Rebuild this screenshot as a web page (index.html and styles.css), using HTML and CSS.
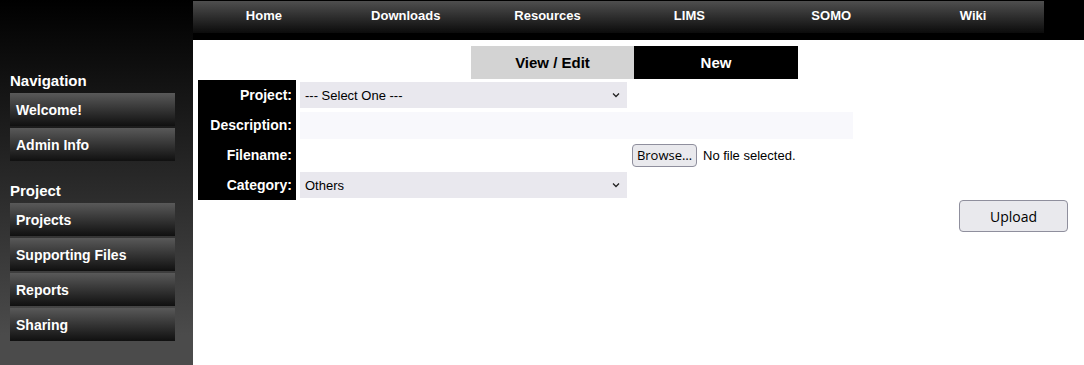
FILE: index.html
```html
<!DOCTYPE html>
<html lang="en">
<head>
  <meta charset="UTF-8" />
  <title>Supporting Files - New</title>
  <link rel="stylesheet" href="styles.css">
</head>
<body>
  <div class="page">
    <aside class="sidebar">
      <h3>Navigation</h3>
      <a class="side-btn" href="#">Welcome!</a>
      <a class="side-btn" href="#">Admin Info</a>
      <h3>Project</h3>
      <a class="side-btn" href="#">Projects</a>
      <a class="side-btn" href="#">Supporting Files</a>
      <a class="side-btn" href="#">Reports</a>
      <a class="side-btn" href="#">Sharing</a>
      <h3>Analysis</h3>
    </aside>
    <div class="main">
      <div class="topbar">
        <nav class="topnav">
          <a href="#">Home</a>
          <a href="#">Downloads</a>
          <a href="#">Resources</a>
          <a href="#">LIMS</a>
          <a href="#">SOMO</a>
          <a href="#">Wiki</a>
        </nav>
      </div>
      <div class="content">
        <div class="tabs">
          <a class="tab" href="#">View / Edit</a>
          <a class="tab active" href="#">New</a>
        </div>
        <form class="upload-form">
          <div class="label">Project:</div>
          <div class="field">
            <span class="select-wrap">
              <select><option>--- Select One ---</option></select>
              <svg class="chev" width="8" height="6" viewBox="0 0 8 6"><path d="M1 1.5 L4 4.5 L7 1.5" fill="none" stroke="#222" stroke-width="1.3"/></svg>
            </span>
          </div>
          <div class="label">Description:</div>
          <div class="field"><input class="desc" type="text"></div>
          <div class="label">Filename:</div>
          <div class="field file-field">
            <button type="button" class="browse">Browse…</button>
            <span class="nofile">No file selected.</span>
          </div>
          <div class="label">Category:</div>
          <div class="field">
            <span class="select-wrap">
              <select><option>Others</option></select>
              <svg class="chev" width="8" height="6" viewBox="0 0 8 6"><path d="M1 1.5 L4 4.5 L7 1.5" fill="none" stroke="#222" stroke-width="1.3"/></svg>
            </span>
          </div>
        </form>
        <div class="actions">
          <button type="button" class="upload">Upload</button>
        </div>
      </div>
    </div>
  </div>
</body>
</html>
```

FILE: styles.css
```css
body {
  margin: 0;
  background: #000;
  font-family: "Liberation Sans", Arial, sans-serif;
  color: #fff;
}
.page {
  display: grid;
  grid-template-columns: 193px 1fr;
  min-height: 365px;
}
.sidebar {
  background: linear-gradient(#000 0, #4b4b4b 335px);
  padding: 0 18px 0 10px;
  height: 365px;
  overflow: hidden;
}
.sidebar h3 {
  margin: 21px 0 3px;
  font-size: 15px;
  line-height: 18px;
}
.sidebar h3:first-child { margin-top: 72px; }
.side-btn {
  display: block;
  height: 33px;
  line-height: 34px;
  margin-bottom: 2px;
  padding-left: 6px;
  background: linear-gradient(#595959, #101010);
  color: #fff;
  text-decoration: none;
  font-weight: bold;
  font-size: 14px;
}
.main { background: #fff; }
.topbar {
  background: #000;
  height: 40px;
  padding-top: 1px;
  box-sizing: border-box;
}
.topnav {
  width: 851px;
  height: 32px;
  display: flex;
  background: linear-gradient(#4f4f4f, #0b0b0b);
}
.topnav a {
  flex: 1;
  text-align: center;
  line-height: 29px;
  color: #fff;
  text-decoration: none;
  font-weight: bold;
  font-size: 13px;
}
.content {
  padding: 6px 16px 0 5px;
  color: #000;
}
.tabs {
  display: flex;
  justify-content: center;
  padding-left: 3px;
}
.tab {
  width: 163px;
  height: 33px;
  line-height: 33px;
  text-align: center;
  background: #d3d3d3;
  color: #000;
  font-weight: bold;
  font-size: 15px;
  text-decoration: none;
}
.tab.active {
  width: 164px;
  background: #000;
  color: #fff;
}
.upload-form {
  display: grid;
  grid-template-columns: 98px 1fr;
  margin-top: 1px;
}
.label {
  background: #000;
  color: #fff;
  font-weight: bold;
  font-size: 14px;
  text-align: right;
  padding-right: 4px;
  height: 30px;
  line-height: 30px;
}
.field {
  display: flex;
  align-items: center;
  padding-left: 4px;
}
.select-wrap {
  position: relative;
  display: inline-block;
}
.select-wrap select {
  appearance: none;
  width: 327px;
  height: 26px;
  border: 0;
  border-radius: 0;
  background: #e9e8ee;
  font-family: "Liberation Sans", Arial, sans-serif;
  font-size: 13px;
  color: #000;
  padding: 0 0 0 5px;
}
.chev {
  position: absolute;
  right: 7px;
  top: 10px;
  pointer-events: none;
}
.desc {
  width: 553px;
  height: 27px;
  box-sizing: border-box;
  border: 0;
  background: #f8f8fc;
}
.file-field { padding-left: 336px; }
.browse {
  width: 65px;
  height: 23px;
  padding: 0;
  border: 1px solid #8f8f9d;
  border-radius: 4px;
  background: #e9e9ed;
  font-family: "Open Sans", sans-serif;
  font-size: 13px;
  color: #000;
}
.nofile {
  margin-left: 6px;
  font-size: 13px;
}
.actions {
  display: flex;
  justify-content: flex-end;
}
.upload {
  width: 109px;
  height: 32px;
  border: 1px solid #8f8f9d;
  border-radius: 4px;
  background: #e9e9ed;
  font-family: "Open Sans", sans-serif;
  font-size: 14px;
  color: #000;
}
```
